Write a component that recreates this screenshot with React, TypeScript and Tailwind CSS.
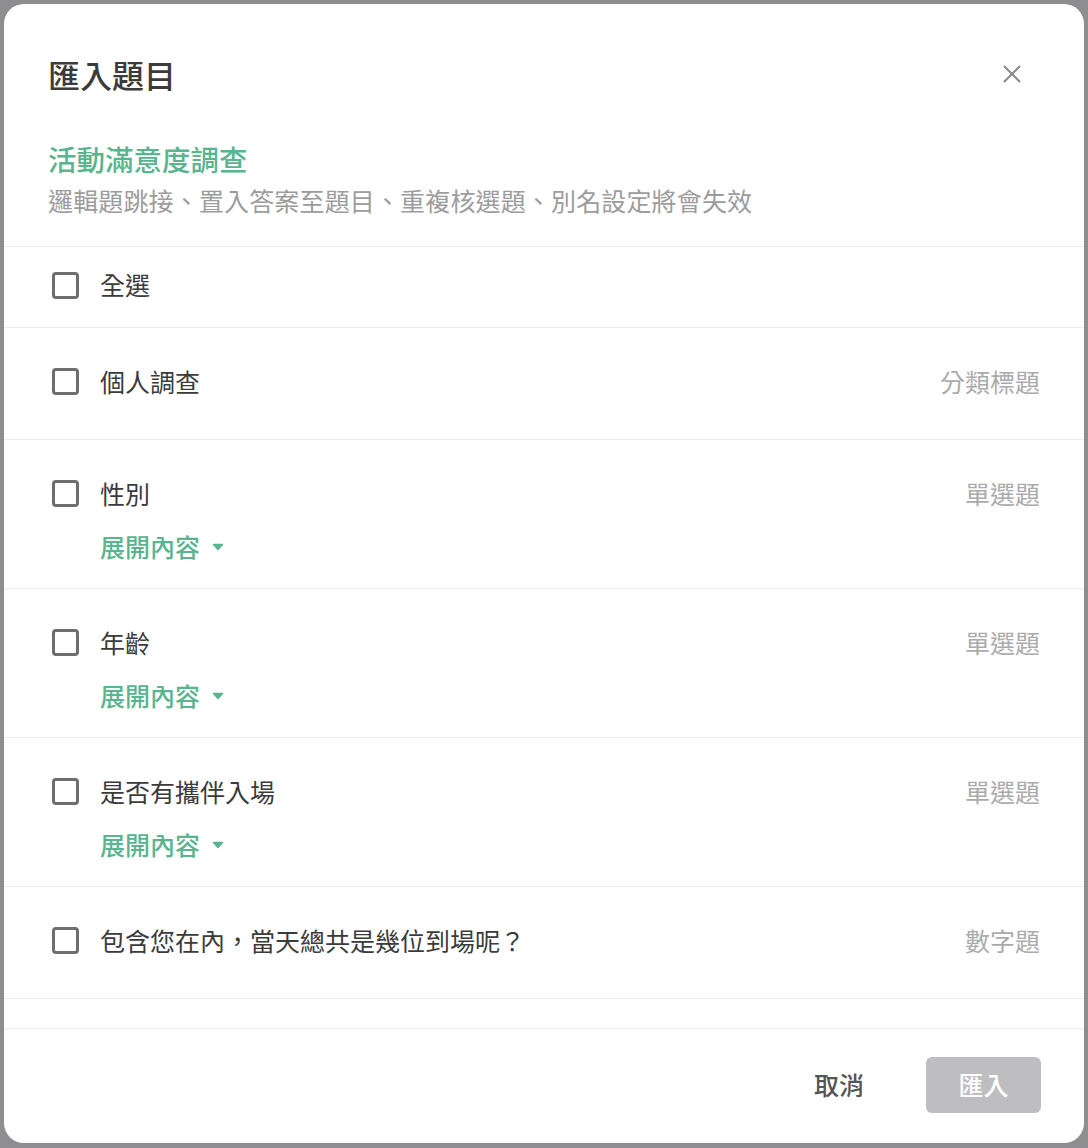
import { X } from 'lucide-react';

type Question = {
  title: string;
  kind: string;
  expandable: boolean;
};

const questions: Question[] = [
  { title: '個人調查', kind: '分類標題', expandable: false },
  { title: '性別', kind: '單選題', expandable: true },
  { title: '年齡', kind: '單選題', expandable: true },
  { title: '是否有攜伴入場', kind: '單選題', expandable: true },
  { title: '包含您在內，當天總共是幾位到場呢？', kind: '數字題', expandable: false },
];

function CheckBox() {
  return (
    <span className="w-[27px] h-[27px] shrink-0 rounded-[4px] border-[3px] border-[#6e6e6e] bg-white" />
  );
}

export default function App() {
  return (
    <div
      className="w-[1088px] h-[1148px] bg-[#8e8d8f] p-[4px] font-['Noto_Sans_CJK_TC','Noto_Sans',sans-serif]"
    >
      <div className="w-[1080px] h-[1139px] bg-white rounded-[20px] flex flex-col overflow-hidden">
        {/* header */}
        <div className="px-[44px] pt-[48px] pb-[26px] border-b border-[#ececec]">
          <div className="h-[44px] flex items-center justify-between">
            <h2 className="text-[32px] font-medium text-[#3b3b3b] leading-[44px]">匯入題目</h2>
            <button className="w-[40px] h-[40px] mr-[8px] flex items-center justify-center text-[#8a8a8a]">
              <X size={30} strokeWidth={1.6} />
            </button>
          </div>
          <div className="mt-[43px] h-[40px] text-[28.5px] leading-[40px] font-medium text-[#5ab48d]">
            活動滿意度調查
          </div>
          <div className="mt-[1px] h-[40px] text-[25px] leading-[40px] tracking-[0.15px] text-[#9c9c9c]">
            邏輯題跳接、置入答案至題目、重複核選題、別名設定將會失效
          </div>
        </div>

        {/* list */}
        <div className="flex-1 flex flex-col">
          <label className="h-[81px] px-[48px] pb-[4px] flex items-center gap-[21px] border-b border-[#ececec]">
            <CheckBox />
            <span className="text-[25px] text-[#3b3b3b]">全選</span>
          </label>

          {questions.map((q) => (
            <div
              key={q.title}
              className={
                q.expandable
                  ? 'h-[149px] px-[44px] pt-[37px] border-b border-[#ececec]'
                  : 'h-[112px] px-[44px] pt-[37px] border-b border-[#ececec]'
              }
            >
              <div className="h-[32px] flex items-center justify-between">
                <div className="flex items-center gap-[21px] pl-[4px]">
                  <CheckBox />
                  <span className="text-[25px] leading-[32px] text-[#3b3b3b]">{q.title}</span>
                </div>
                <span className="text-[25px] leading-[32px] text-[#ababab]">{q.kind}</span>
              </div>
              {q.expandable && (
                <button className="mt-[21px] ml-[52px] h-[32px] flex items-center gap-[12px] text-[25px] leading-[32px] font-medium text-[#5ab48d]">
                  展開內容
                  <svg width="12" height="8" viewBox="0 0 12 8" className="mt-[2px]">
                    <path d="M1.5 1.5h9L6 6.5z" fill="#5ab48d" stroke="#5ab48d" strokeWidth="1.5" strokeLinejoin="round" />
                  </svg>
                </button>
              )}
            </div>
          ))}
          <div className="h-[29px]" />
        </div>

        {/* footer */}
        <div className="h-[116px] border-t border-[#ececec] px-[43px] pb-[2px] flex items-center justify-end gap-[30px]">
          <button className="h-[56px] px-[32px] text-[25px] font-medium text-[#555555]">取消</button>
          <button className="w-[115px] h-[56px] rounded-[6px] bg-[#bebdbf] text-[25px] font-medium text-white">
            匯入
          </button>
        </div>
      </div>
    </div>
  );
}
